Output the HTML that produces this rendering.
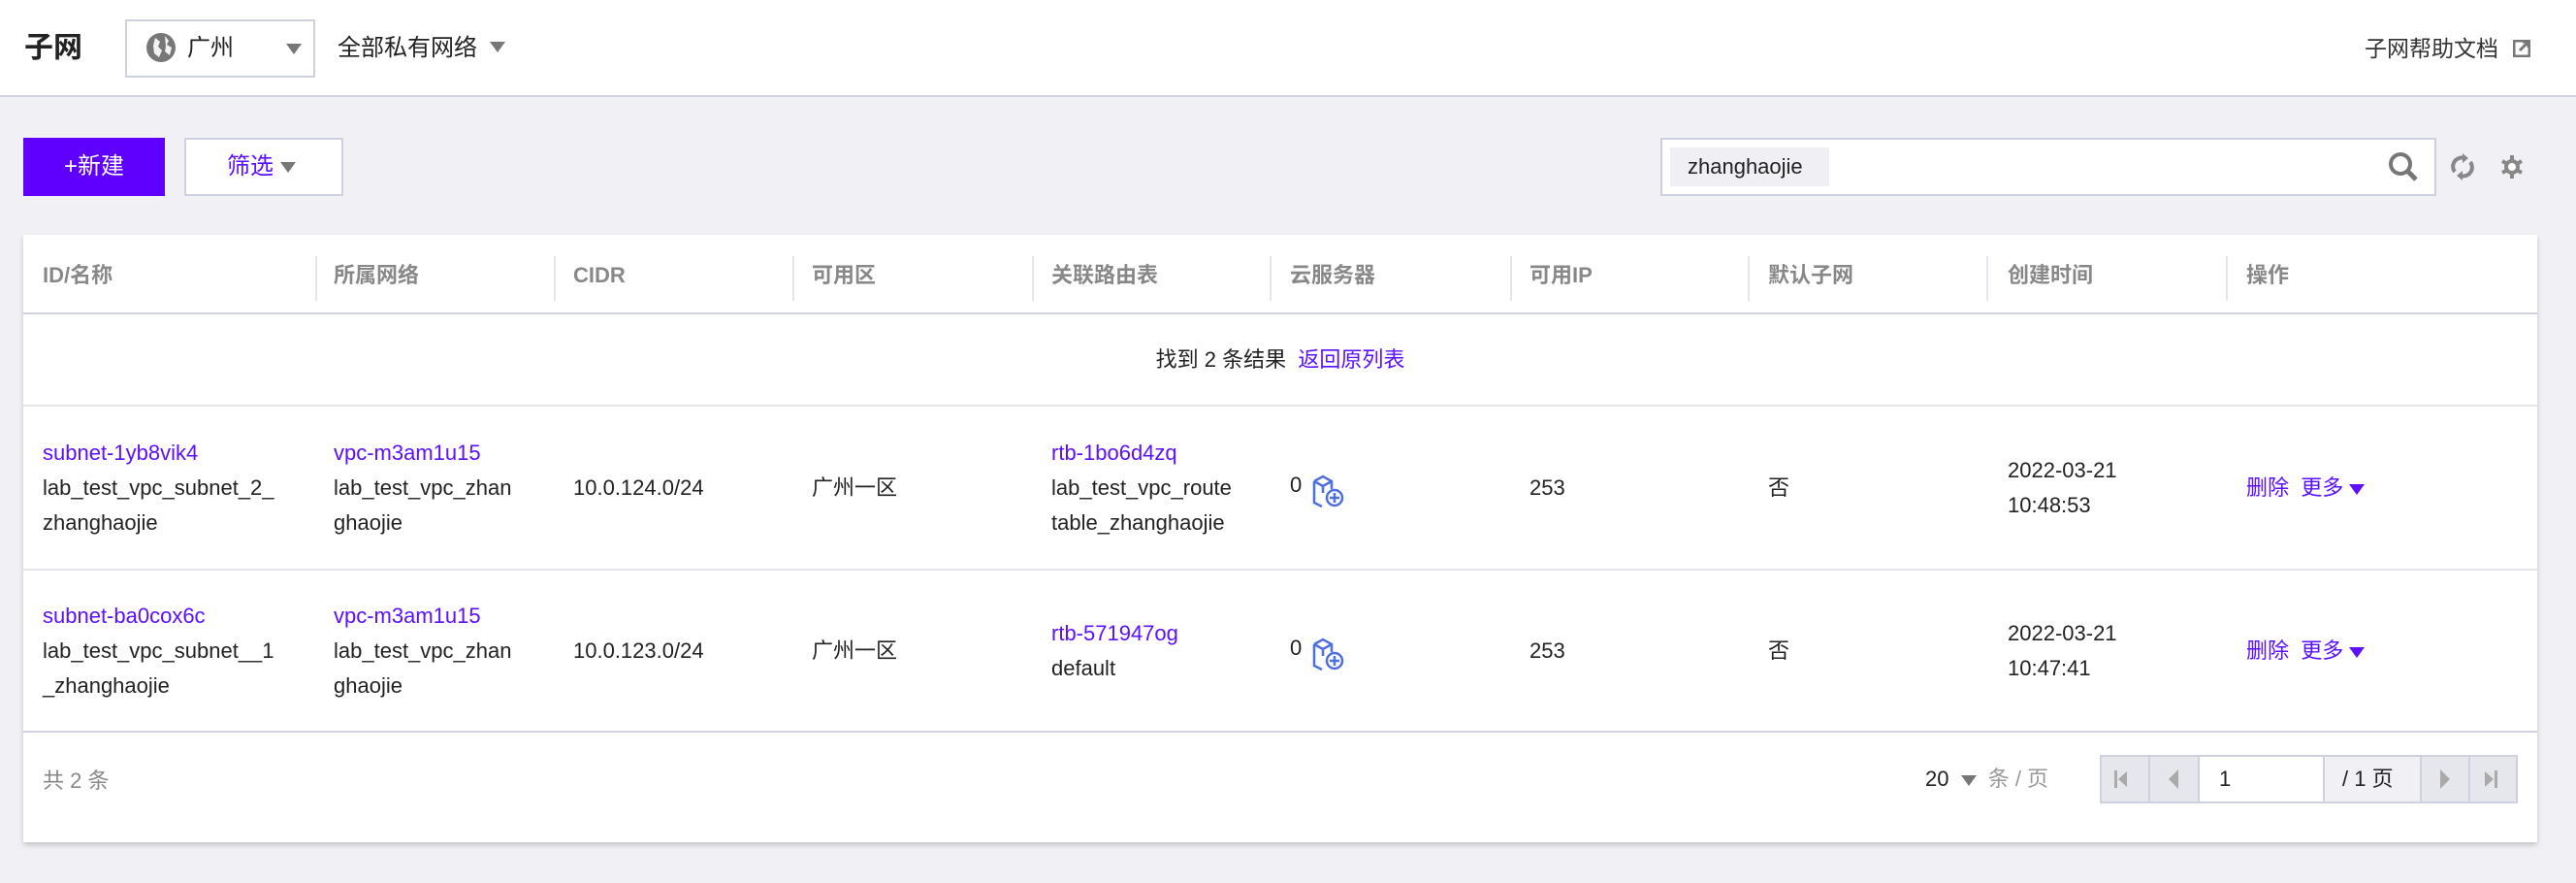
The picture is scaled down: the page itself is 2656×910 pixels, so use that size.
<!DOCTYPE html>
<html><head><meta charset="utf-8"><style>
*{box-sizing:border-box;margin:0;padding:0}
body{width:2656px;height:910px;background:#f0f0f5;font-family:"Liberation Sans","Noto Sans CJK SC",sans-serif;color:#222;position:relative;overflow:hidden;font-size:22px}
.a{position:absolute}
.hdr{left:0;top:0;width:2656px;height:100px;background:#fff;border-bottom:2px solid #d0d3df}
.link{color:#5b10ff}
.tri{display:inline-block;width:0;height:0;border-left:8px solid transparent;border-right:8px solid transparent;border-top:11px solid #777}
.card{left:24px;top:242px;width:2592px;height:626px;background:#fff;box-shadow:0 3px 5px rgba(0,0,0,.18)}
.th{top:2px;height:80px;line-height:80px;color:#888;font-weight:bold;font-size:22px}
.sep{top:22px;width:2px;height:46px;background:#e5e6ec}
.cell{line-height:36px}
.pg{top:778px;height:50px;border:2px solid #cfd2de;background:#e6e7ed}
</style></head><body>
<div class="a hdr"></div>
<div class="a" style="left:25px;top:30px;font-size:30px;font-weight:bold;line-height:40px">子网</div>
<div class="a" style="left:129px;top:20px;width:196px;height:60px;border:2px solid #cfd2de;background:#fff"></div>
<svg class="a" style="left:150px;top:33px" width="32" height="32" viewBox="0 0 32 32"><circle cx="16" cy="16" r="15" fill="#777"/><path d="M10 6 L15 10 L13 15 L17 19 L14 26 L9 22 L8 14 Z M20 4 L24 9 L22 13 L27 16 L25 24 L20 20 L21 15 Z" fill="#fff" opacity=".9"/></svg>
<div class="a" style="left:193px;top:34px;font-size:24px;line-height:32px">广州</div>
<div class="a tri" style="left:295px;top:45px"></div>
<div class="a" style="left:348px;top:34px;font-size:24px;line-height:32px">全部私有网络</div>
<div class="a tri" style="left:505px;top:43px"></div>
<div class="a" style="left:2438px;top:34px;font-size:23px;line-height:32px;color:#333">子网帮助文档</div>
<svg class="a" style="left:2591px;top:41px" width="18" height="18" viewBox="0 0 18 18"><rect x="1" y="1" width="16" height="16" fill="none" stroke="#777" stroke-width="3"/><path d="M7 11 L15 3 M10 2 H16 V8" stroke="#777" stroke-width="3" fill="none"/></svg>

<div class="a" style="left:24px;top:142px;width:146px;height:60px;background:#5f00ff;color:#fff;text-align:center;line-height:60px;font-size:24px">+新建</div>
<div class="a" style="left:190px;top:142px;width:164px;height:60px;background:#fff;border:2px solid #cfd2de;line-height:56px;padding-left:42px;font-size:24px;color:#5b10ff">筛选 <span class="tri" style="border-top-color:#777;vertical-align:middle"></span></div>

<div class="a" style="left:1712px;top:142px;width:800px;height:60px;background:#fff;border:2px solid #cfd2de"></div>
<div class="a" style="left:1722px;top:152px;width:164px;height:40px;background:#f0f0f4;line-height:40px;padding-left:18px;font-size:22px">zhanghaojie</div>
<svg class="a" style="left:2462px;top:156px" width="32" height="32" viewBox="0 0 32 32"><circle cx="13" cy="13" r="10" fill="none" stroke="#777" stroke-width="4"/><path d="M20 20 L29 29" stroke="#777" stroke-width="5"/></svg>
<svg class="a" style="left:2526px;top:157px" width="26" height="30" viewBox="0 0 26 30"><path d="M5 20 A9 9 0 0 1 15 6" fill="none" stroke="#888" stroke-width="4"/><path d="M21 10 A9 9 0 0 1 11 24" fill="none" stroke="#888" stroke-width="4"/><path d="M13 1 L19 6 L13 11Z M13 29 L7 24 L13 19Z" fill="#888"/></svg>
<svg class="a" style="left:2577px;top:158px" width="26" height="28" viewBox="0 0 26 28"><path d="M13 2 V7 M13 21 V26 M3 8 L7.5 10.5 M18.5 17.5 L23 20 M3 20 L7.5 17.5 M18.5 10.5 L23 8" stroke="#888" stroke-width="4"/><circle cx="13" cy="14" r="6" fill="#fff" stroke="#888" stroke-width="4"/></svg>

<div class="a card">
 <div class="a th" style="left:20px">ID/名称</div>
 <div class="a th" style="left:320px">所属网络</div>
 <div class="a th" style="left:567px">CIDR</div>
 <div class="a th" style="left:813px">可用区</div>
 <div class="a th" style="left:1060px">关联路由表</div>
 <div class="a th" style="left:1306px">云服务器</div>
 <div class="a th" style="left:1553px">可用IP</div>
 <div class="a th" style="left:1799px">默认子网</div>
 <div class="a th" style="left:2046px">创建时间</div>
 <div class="a th" style="left:2292px">操作</div>
 <div class="a sep" style="left:301px"></div><div class="a sep" style="left:547px"></div><div class="a sep" style="left:793px"></div><div class="a sep" style="left:1040px"></div><div class="a sep" style="left:1285px"></div><div class="a sep" style="left:1533px"></div><div class="a sep" style="left:1778px"></div><div class="a sep" style="left:2024px"></div><div class="a sep" style="left:2271px"></div>
 <div class="a" style="left:0;top:80px;width:2592px;height:2px;background:#d0d3df"></div>
 <div class="a" style="left:0;top:114px;width:2592px;text-align:center;line-height:30px">找到 2 条结果 &nbsp;<span class="link">返回原列表</span></div>
 <div class="a" style="left:0;top:175px;width:2592px;height:2px;background:#e5e6ec"></div>
 <div class="a cell" style="left:20px;top:207px"><span class="link">subnet-1yb8vik4</span><br>lab_test_vpc_subnet_2_<br>zhanghaojie</div>
 <div class="a cell" style="left:320px;top:207px"><span class="link">vpc-m3am1u15</span><br>lab_test_vpc_zhan<br>ghaojie</div>
 <div class="a cell" style="left:567px;top:243px">10.0.124.0/24</div>
 <div class="a cell" style="left:813px;top:243px">广州一区</div>
 <div class="a cell" style="left:1060px;top:207px"><span class="link">rtb-1bo6d4zq</span><br>lab_test_vpc_route<br>table_zhanghaojie</div>
 <div class="a cell" style="left:1306px;top:240px">0</div>
 <div class="a cell" style="left:1553px;top:243px">253</div>
 <div class="a cell" style="left:1799px;top:243px">否</div>
 <div class="a cell" style="left:2046px;top:225px">2022-03-21<br>10:48:53</div>
 <div class="a cell link" style="left:2292px;top:243px">删除 &nbsp;更多 <span class="tri" style="border-top-color:#5b10ff;vertical-align:middle"></span></div>
 <div class="a" style="left:0;top:344px;width:2592px;height:2px;background:#e5e6ec"></div>
 <div class="a cell" style="left:20px;top:375px"><span class="link">subnet-ba0cox6c</span><br>lab_test_vpc_subnet__1<br>_zhanghaojie</div>
 <div class="a cell" style="left:320px;top:375px"><span class="link">vpc-m3am1u15</span><br>lab_test_vpc_zhan<br>ghaojie</div>
 <div class="a cell" style="left:567px;top:411px">10.0.123.0/24</div>
 <div class="a cell" style="left:813px;top:411px">广州一区</div>
 <div class="a cell" style="left:1060px;top:393px"><span class="link">rtb-571947og</span><br>default</div>
 <div class="a cell" style="left:1306px;top:408px">0</div>
 <div class="a cell" style="left:1553px;top:411px">253</div>
 <div class="a cell" style="left:1799px;top:411px">否</div>
 <div class="a cell" style="left:2046px;top:393px">2022-03-21<br>10:47:41</div>
 <div class="a cell link" style="left:2292px;top:411px">删除 &nbsp;更多 <span class="tri" style="border-top-color:#5b10ff;vertical-align:middle"></span></div>
 <div class="a" style="left:0;top:511px;width:2592px;height:2px;background:#d0d3df"></div>
 <div class="a" style="left:20px;top:548px;line-height:30px;color:#888">共 2 条</div>
</div>
<svg class="a" style="left:1353px;top:488px" width="34" height="36" viewBox="0 0 34 36"><path d="M2 8 L11 3 L20 8 V16 M2 8 V30 L10 34 M2 8 L11 13 L20 8 M11 13 V20" fill="none" stroke="#4f6fe0" stroke-width="2.5"/><circle cx="23" cy="25" r="8" fill="#fff" stroke="#4f6fe0" stroke-width="2.5"/><path d="M23 20 V30 M18 25 H28" stroke="#4f6fe0" stroke-width="2.5"/></svg>
<svg class="a" style="left:1353px;top:656px" width="34" height="36" viewBox="0 0 34 36"><path d="M2 8 L11 3 L20 8 V16 M2 8 V30 L10 34 M2 8 L11 13 L20 8 M11 13 V20" fill="none" stroke="#4f6fe0" stroke-width="2.5"/><circle cx="23" cy="25" r="8" fill="#fff" stroke="#4f6fe0" stroke-width="2.5"/><path d="M23 20 V30 M18 25 H28" stroke="#4f6fe0" stroke-width="2.5"/></svg>

<div class="a" style="left:1985px;top:788px;line-height:30px">20 <span class="tri" style="vertical-align:middle;margin:0 6px"></span> <span style="color:#999">条 / 页</span></div>
<div class="a pg" style="left:2165px;width:52px"></div>
<div class="a" style="left:2180px;top:794px;width:3px;height:18px;background:#aaa"></div><div class="a" style="left:2184px;top:795px;border-top:8px solid transparent;border-bottom:8px solid transparent;border-right:9px solid #aaa"></div>
<div class="a pg" style="left:2215px;width:53px"></div>
<div class="a" style="left:2236px;top:793px;border-top:10px solid transparent;border-bottom:10px solid transparent;border-right:10px solid #aaa"></div>
<div class="a pg" style="left:2266px;width:131px;background:#fff;line-height:46px;padding-left:20px">1</div>
<div class="a pg" style="left:2395px;width:102px;background:#f0f0f5;line-height:46px;padding-left:18px">/ 1 页</div>
<div class="a pg" style="left:2495px;width:52px"></div>
<div class="a" style="left:2516px;top:793px;border-top:10px solid transparent;border-bottom:10px solid transparent;border-left:10px solid #aaa"></div>
<div class="a pg" style="left:2545px;width:51px"></div>
<div class="a" style="left:2562px;top:795px;border-top:8px solid transparent;border-bottom:8px solid transparent;border-left:9px solid #aaa"></div><div class="a" style="left:2572px;top:794px;width:3px;height:18px;background:#aaa"></div>
</body></html>
